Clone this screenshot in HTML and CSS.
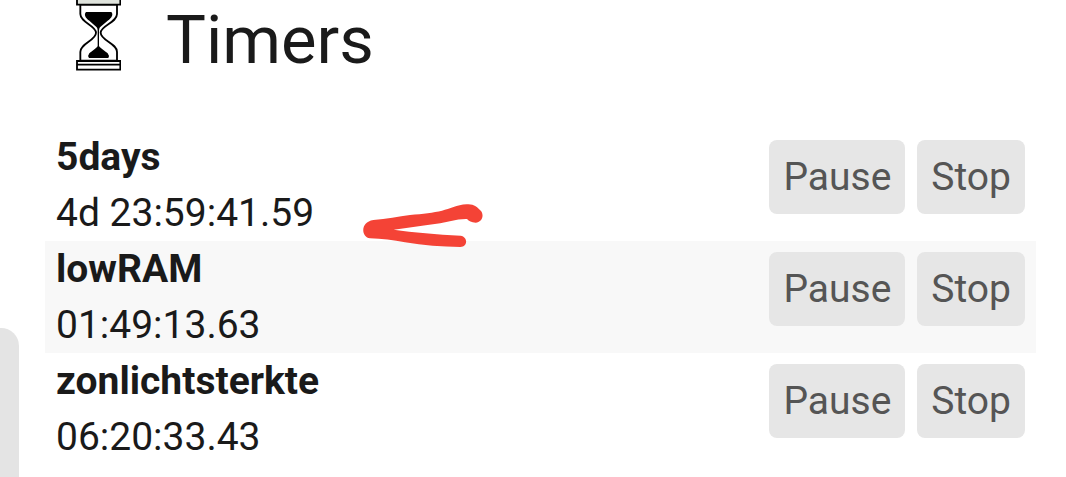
FILE: index.html
```html
<!DOCTYPE html>
<html lang="en">
<head>
<meta charset="utf-8">
<meta name="viewport" content="width=device-width, initial-scale=1">
<title>Timers</title>
<link rel="stylesheet" href="styles.css">
</head>
<body>
<aside class="drawer-edge"></aside>
<main class="page">
  <header class="heading">
    <svg class="hourglass" viewBox="45 0 138 216" aria-hidden="true">
      <g fill="#fff" stroke="#000" stroke-width="5.500">
        <path d="M61 14V42C61 68 108 76 108 98C108 121 61 130 61 156V182H171V156C171 130 122 121 122 98C122 76 171 68 171 42V14Z"/>
        <path fill="#dfe3dc" d="M51 -6H181V14H51Z"/>
        <path d="M51 183H181V209H51ZM51 194H181"/>
      </g>
      <path d="M78 36H154C161 44 155 54 143 62L120 82C117 86 117 90 117 98V138C121 145 137 154 143 160Q149 167 145 174H87Q82 167 88 160C94 154 110 145 113 138V98C113 90 113 86 110 82L88 62C76 54 71 44 78 36Z"/>
    </svg>
    <h1 class="title">Timers</h1>
  </header>
  <ul class="timers">
    <li class="timer">
      <div class="info"><strong class="name">5days</strong><span class="time">4d 23:59:41.59</span></div>
      <div class="actions"><button class="button" type="button">Pause</button><button class="button" type="button">Stop</button></div>
      <svg class="mark" viewBox="36 39 366 138" aria-hidden="true">
        <path fill="#f44336" d="M70 90C110 87 145 80 180 75C220 71 250 68 276 62C300 57 320 44 350 43C371 41 382 51 393 63C404 78 394 98 377 98C364 98 357 93 351 87C320 86 290 98 260 101C215 107 175 113 131 119C190 127 260 133 332 137C354 140 354 171 331 171C275 171 220 166 165 157C130 150 95 146 60 145C32 140 31 96 70 90Z"/>
      </svg>
    </li>
    <li class="timer">
      <div class="info"><strong class="name">lowRAM</strong><span class="time">01:49:13.63</span></div>
      <div class="actions"><button class="button" type="button">Pause</button><button class="button" type="button">Stop</button></div>
    </li>
    <li class="timer">
      <div class="info"><strong class="name">zonlichtsterkte</strong><span class="time">06:20:33.43</span></div>
      <div class="actions"><button class="button" type="button">Pause</button><button class="button" type="button">Stop</button></div>
    </li>
  </ul>
</main>
</body>
</html>
```
FILE: styles.css
```css
* { box-sizing: border-box; }
body {
  margin: 0;
  background: #fff;
  color: #1a1a1a;
  font-family: Roboto, "Liberation Sans", sans-serif;
  font-size: 39px;
  line-height: 56px;
}
.drawer-edge {
  position: absolute;
  top: 328px;
  bottom: 0;
  left: 0;
  width: 19px;
  background: #e4e4e4;
  border-top-right-radius: 18px;
}
.page { padding: 0 30px 12px 45px; }
.heading {
  display: flex;
  gap: 45px;
  padding: 0 30px 49px;
}
.hourglass { width: 46px; height: 72px; }
.title {
  margin: 0;
  font-size: 67px;
  font-weight: 400;
  line-height: 80px;
}
.timers { margin: 0; padding: 0; list-style: none; }
.timer {
  position: relative;
  display: flex;
  align-items: flex-start;
  justify-content: space-between;
  padding: 0 11px;
}
.timer:nth-child(even) { background: #f8f8f8; }
.info { display: flex; flex-direction: column; }
.name { font-weight: 700; }
.actions { display: flex; gap: 12px; padding-top: 11px; }
.button {
  height: 74px;
  padding: 0 14px;
  border: 0;
  border-radius: 8px;
  background: #e6e6e6;
  color: #555;
  font: inherit;
}
.mark {
  position: absolute;
  z-index: 1;
  top: 74px;
  left: 317px;
  width: 122px;
  height: 46px;
}
```
